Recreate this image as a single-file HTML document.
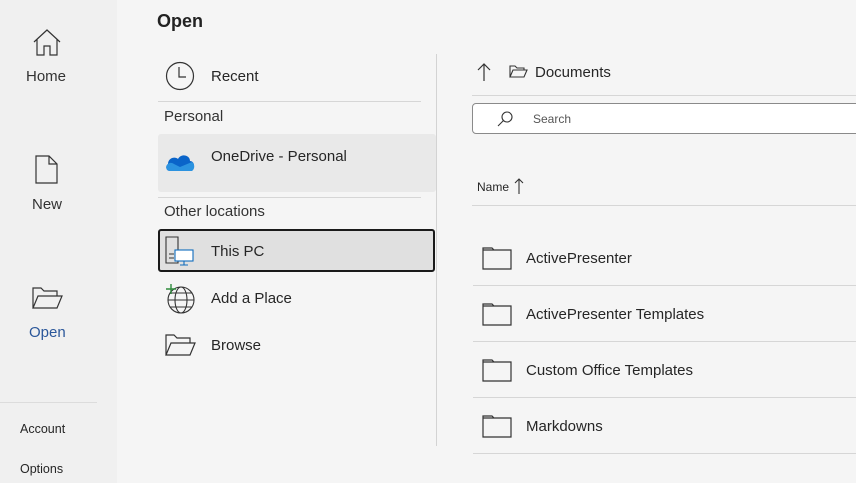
<!DOCTYPE html><html><head><style>
*{margin:0;padding:0;box-sizing:border-box}
body{width:856px;height:483px;overflow:hidden;background:#f5f5f5;font-family:"Liberation Sans",sans-serif;color:#262626;position:relative}
.a{position:absolute;white-space:nowrap}
.side{position:absolute;left:0;top:0;width:117px;height:483px;background:#f0f0f0}
.t15{font-size:15px}
.hl{position:absolute;height:1px;background:#d6d6d6}
</style></head><body>
<div class="side"></div>
<svg class="a" style="left:32px;top:28px" width="30" height="30" viewBox="0 0 30 30" fill="none" stroke="#333" stroke-width="1.2"><path d="M2 14 L15 2 L28 14 M5 11 V27 H12 V18 H18 V27 H25 V11"/></svg>
<div class="a t15" style="left:26px;top:68px;color:#333">Home</div>
<svg class="a" style="left:35px;top:155px" width="24" height="30" viewBox="0 0 24 30" fill="none" stroke="#333" stroke-width="1.2"><path d="M1 1 H14 L22 9 V28 H1 Z M14 1 V9 H22"/></svg>
<div class="a t15" style="left:32px;top:196px;color:#333">New</div>
<svg class="a" style="left:32px;top:287px" width="31" height="22" viewBox="0 0 31 22" fill="none" stroke="#333" stroke-width="1.2"><path d="M1 21 V1 H9 L12 4 H25 V9 M1 21 L6 9 H30 L25 21 Z"/></svg>
<div class="a t15" style="left:29px;top:324px;color:#2b579a">Open</div>
<div class="hl" style="left:0;top:402px;width:97px;background:#dcdcdc"></div>
<div class="a" style="left:20px;top:422px;font-size:12.5px">Account</div>
<div class="a" style="left:20px;top:462px;font-size:12.5px">Options</div>

<div class="a" style="left:157px;top:11px;font-size:18px;font-weight:bold;color:#222">Open</div>
<svg class="a" style="left:165px;top:61px" width="30" height="30" viewBox="0 0 30 30" fill="none" stroke="#333" stroke-width="1.2"><circle cx="15" cy="15" r="13.5"/><path d="M14 6 V16 H21"/></svg>
<div class="a t15" style="left:211px;top:68px">Recent</div>
<div class="hl" style="left:158px;top:101px;width:263px"></div>
<div class="a t15" style="left:164px;top:108px;color:#333">Personal</div>
<div class="a" style="left:158px;top:134px;width:278px;height:58px;background:#e9e9e9;border-radius:3px"></div>
<svg class="a" style="left:165px;top:152px" width="30" height="20" viewBox="0 0 30 20"><path d="M5 19 C1 19 0 14 3 12 C3 6 10 4 13 7 C16 1 25 3 25 9 C29 9 30 14 28 17 L20 19 Z" fill="#0a64c9"/><path d="M3 12 C5 10 8 11 9 12 L15 15 L27 10 C30 12 30 17 27 19 H5 C1 19 0 14 3 12Z" fill="#2c93e0"/></svg>
<div class="a t15" style="left:211px;top:148px">OneDrive - Personal</div>
<div class="hl" style="left:158px;top:197px;width:263px"></div>
<div class="a t15" style="left:164px;top:203px;color:#333">Other locations</div>
<div class="a" style="left:158px;top:229px;width:277px;height:43px;background:#e0e0e0;border:2px solid #1a1a1a;border-radius:3px"></div>
<svg class="a" style="left:165px;top:236px" width="30" height="31" viewBox="0 0 30 31" fill="none" stroke-width="1.1"><path d="M1 1 H13 V27 H1 Z M4 18 H9 M4 22 H9" stroke="#333"/><rect x="10" y="14" width="18" height="11" fill="#fff" stroke="#0f6cbd"/><path d="M19 25 V29 M15 29 H23" stroke="#0f6cbd"/></svg>
<div class="a t15" style="left:211px;top:243px">This PC</div>
<svg class="a" style="left:164px;top:282px" width="32" height="32" viewBox="0 0 32 32" fill="none" stroke="#333" stroke-width="1.1"><circle cx="17" cy="18" r="13"/><ellipse cx="17" cy="18" rx="6" ry="13"/><path d="M4 18 H30 M6 11 H28 M6 25 H28"/><path d="M2 7 H12 M7 2 V12" stroke="#2e8b3d" stroke-width="1.4"/></svg>
<div class="a t15" style="left:211px;top:290px">Add a Place</div>
<svg class="a" style="left:165px;top:334px" width="31" height="22" viewBox="0 0 31 22" fill="none" stroke="#333" stroke-width="1.2"><path d="M1 21 V1 H9 L12 4 H25 V9 M1 21 L6 9 H30 L25 21 Z"/></svg>
<div class="a t15" style="left:211px;top:337px">Browse</div>
<div class="a" style="left:436px;top:54px;width:1px;height:392px;background:#d3d3d3"></div>

<svg class="a" style="left:476px;top:62px" width="16" height="20" viewBox="0 0 16 20" fill="none" stroke="#333" stroke-width="1.2"><path d="M8 19 V2 M2 8 L8 2 L14 8"/></svg>
<svg class="a" style="left:509px;top:65px" width="19" height="13" viewBox="0 0 19 13" fill="none" stroke="#333" stroke-width="1.1"><path d="M1 12 V1 H6 L8 3 H15 V5 M1 12 L4 5 H18 L15 12 Z"/></svg>
<div class="a t15" style="left:535px;top:64px">Documents</div>
<div class="hl" style="left:472px;top:95px;width:384px"></div>
<div class="a" style="left:472px;top:103px;width:390px;height:31px;background:#fff;border:1px solid #8a8a8a;border-radius:4px"></div>
<svg class="a" style="left:497px;top:110px" width="17" height="17" viewBox="0 0 17 17" fill="none" stroke="#333" stroke-width="1.1"><circle cx="10" cy="7" r="5"/><path d="M6.5 10.5 L1 16"/></svg>
<div class="a" style="left:533px;top:112px;font-size:12px;color:#555">Search</div>
<div class="a" style="left:477px;top:180px;font-size:12px">Name</div>
<svg class="a" style="left:513px;top:178px" width="12" height="16" viewBox="0 0 12 16" fill="none" stroke="#333" stroke-width="1.1"><path d="M6 16 V1 M2 5 L6 1 L10 5"/></svg>
<div class="hl" style="left:472px;top:205px;width:384px"></div>

<div class="a" style="left:472px;top:240px">
<svg class="a" style="left:10px;top:7px" width="30" height="23" viewBox="0 0 30 23" fill="none" stroke="#333" stroke-width="1.2"><path d="M1 22 V1 H10 L12 3 H29 V22 Z M1 3 H12"/></svg>
<div class="a t15" style="left:54px;top:10px">ActivePresenter</div></div>
<div class="hl" style="left:473px;top:285px;width:383px"></div>
<div class="a" style="left:472px;top:296px">
<svg class="a" style="left:10px;top:7px" width="30" height="23" viewBox="0 0 30 23" fill="none" stroke="#333" stroke-width="1.2"><path d="M1 22 V1 H10 L12 3 H29 V22 Z M1 3 H12"/></svg>
<div class="a t15" style="left:54px;top:10px">ActivePresenter Templates</div></div>
<div class="hl" style="left:473px;top:341px;width:383px"></div>
<div class="a" style="left:472px;top:352px">
<svg class="a" style="left:10px;top:7px" width="30" height="23" viewBox="0 0 30 23" fill="none" stroke="#333" stroke-width="1.2"><path d="M1 22 V1 H10 L12 3 H29 V22 Z M1 3 H12"/></svg>
<div class="a t15" style="left:54px;top:10px">Custom Office Templates</div></div>
<div class="hl" style="left:473px;top:397px;width:383px"></div>
<div class="a" style="left:472px;top:408px">
<svg class="a" style="left:10px;top:7px" width="30" height="23" viewBox="0 0 30 23" fill="none" stroke="#333" stroke-width="1.2"><path d="M1 22 V1 H10 L12 3 H29 V22 Z M1 3 H12"/></svg>
<div class="a t15" style="left:54px;top:10px">Markdowns</div></div>
<div class="hl" style="left:473px;top:453px;width:383px"></div>
</body></html>
